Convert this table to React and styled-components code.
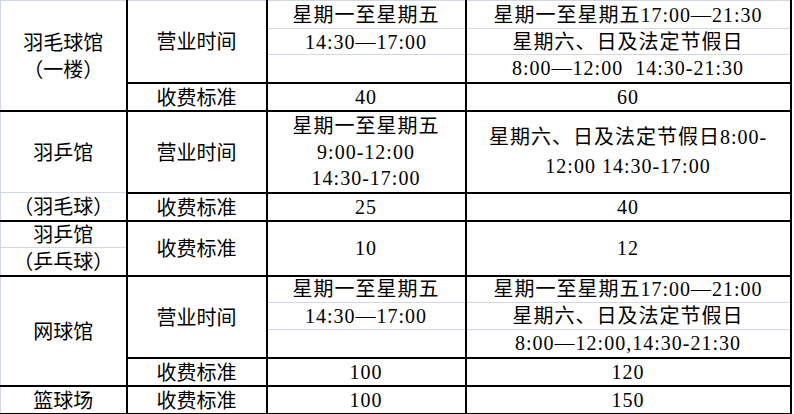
import styled, { createGlobalStyle } from "styled-components";

const GRID = "#d0d7e5";
const LINE = "2px solid #000";

export default function App() {
  return (
    <>
      <GlobalStyle />
      <Sheet>
        <colgroup>
          <col style={{ width: 126 }} />
          <col style={{ width: 140 }} />
          <col style={{ width: 199 }} />
          <col style={{ width: 325 }} />
        </colgroup>
        <tbody>
          <Row $h={28}>
            <Label rowSpan={4} $first $top $lh={27}>
              羽毛球馆
              <br />
              （一楼）
            </Label>
            <Label rowSpan={3} $top>营业时间</Label>
            <Value $thin $top>星期一至星期五</Value>
            <Value $thin $top>星期一至星期五17:00—21:30</Value>
          </Row>
          <Row $h={26}>
            <Value $thin>14:30—17:00</Value>
            <Value $thin>星期六、日及法定节假日</Value>
          </Row>
          <Row $h={28}>
            <Value></Value>
            <Value>{"8:00—12:00\u00a0\u00a014:30-21:30"}</Value>
          </Row>
          <Row $h={28}>
            <Label>收费标准</Label>
            <Value>40</Value>
            <Value>60</Value>
          </Row>

          <Row $h={82}>
            <Label $first $thin>羽乒馆</Label>
            <Label>营业时间</Label>
            <Value $lh={26}>
              星期一至星期五
              <br />
              9:00-12:00
              <br />
              14:30-17:00
            </Value>
            <Value $lh={29}>
              星期六、日及法定节假日8:00-
              <br />
              12:00 14:30-17:00
            </Value>
          </Row>
          <Row $h={28}>
            <Label $first>（羽毛球）</Label>
            <Label>收费标准</Label>
            <Value>25</Value>
            <Value>40</Value>
          </Row>

          <Row $h={27}>
            <Label $first $thin>羽乒馆</Label>
            <Label rowSpan={2}>收费标准</Label>
            <Value rowSpan={2}>10</Value>
            <Value rowSpan={2}>12</Value>
          </Row>
          <Row $h={28}>
            <Label $first>（乒乓球）</Label>
          </Row>

          <Row $h={27}>
            <Label rowSpan={4} $first>网球馆</Label>
            <Label rowSpan={3}>营业时间</Label>
            <Value $thin>星期一至星期五</Value>
            <Value $thin>星期一至星期五17:00—21:00</Value>
          </Row>
          <Row $h={27}>
            <Value $thin>14:30—17:00</Value>
            <Value $thin>星期六、日及法定节假日</Value>
          </Row>
          <Row $h={28}>
            <Value></Value>
            <Value>8:00—12:00,14:30-21:30</Value>
          </Row>
          <Row $h={28}>
            <Label>收费标准</Label>
            <Value>100</Value>
            <Value>120</Value>
          </Row>

          <Row $h={28}>
            <Label $first>篮球场</Label>
            <Label>收费标准</Label>
            <Value>100</Value>
            <Value>150</Value>
          </Row>
        </tbody>
      </Sheet>
    </>
  );
}

const GlobalStyle = createGlobalStyle`
  html, body {
    margin: 0;
    background: #fff;
  }
`;

const Sheet = styled.table`
  table-layout: fixed;
  width: 791px;
  border-collapse: collapse;
  color: #000;
`;

const Row = styled.tr`
  height: ${(p) => p.$h}px;
`;

const Cell = styled.td`
  padding: 0;
  text-align: center;
  vertical-align: middle;
  white-space: nowrap;
  font-size: 20px;
  line-height: ${(p) => p.$lh || 22}px;
  border-right: ${LINE};
  border-bottom: ${(p) => (p.$thin ? `1px solid ${GRID}` : LINE)};
  border-left: ${(p) => (p.$first ? `1px solid ${GRID}` : "none")};
  border-top: ${(p) => (p.$top ? `1px solid ${GRID}` : "none")};
`;

const Label = styled(Cell)`
  font-family: "Noto Sans CJK SC", sans-serif;
`;

const Value = styled(Cell)`
  font-family: "Liberation Serif", "Noto Sans CJK SC", serif;
  letter-spacing: 1px;
`;
